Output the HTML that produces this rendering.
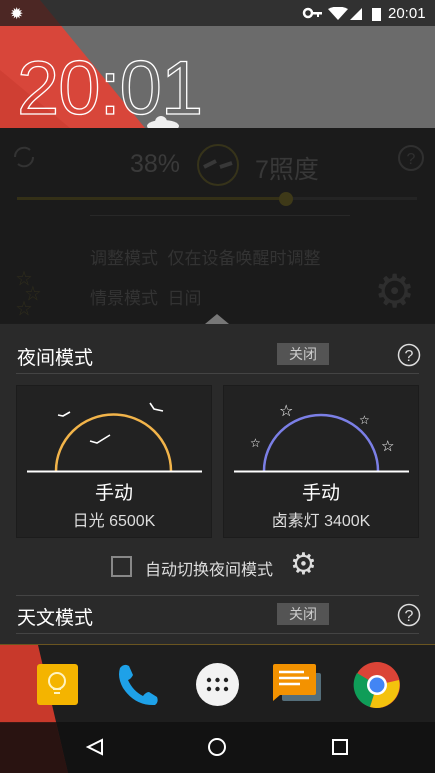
<!DOCTYPE html>
<html><head><meta charset="utf-8"><style>
*{margin:0;padding:0;box-sizing:border-box}
body{width:435px;height:773px;overflow:hidden;background:#1c1c1c;font-family:"Liberation Sans","Noto Sans CJK SC",sans-serif;position:relative;color:#fff}
.abs{position:absolute}
</style></head><body>
<div class="abs" style="left:0;top:0;width:435px;height:128px;background:#6b6b6b"></div>
<svg class="abs" style="left:0;top:0" width="435" height="128"><polygon points="0,0 40,0 145,128 0,128" fill="#d8463a"/><polygon points="0,70 70,128 0,128" fill="#c93a2f" opacity=".6"/></svg>
<div class="abs" style="left:0;top:0;width:435px;height:26px;background:rgba(30,30,30,.75)"></div>
<div class="abs" style="left:10px;top:4px;font-size:16px;color:#fff">✹</div>
<svg class="abs" style="left:302px;top:7px" width="90" height="14">
<circle cx="6" cy="6" r="4" fill="none" stroke="#fff" stroke-width="2.5"/><rect x="9" y="5" width="11" height="2.5" fill="#fff"/><rect x="15" y="6" width="2" height="4" fill="#fff"/>
<path d="M26 2 Q36 -3 46 2 L36 13 Z" fill="#fff"/>
<path d="M60 1 L60 13 L48 13 Z" fill="#fff"/>
<rect x="70" y="1" width="9" height="13" fill="#fff"/>
</svg>
<div class="abs" style="left:388px;top:5px;font-size:15px">20:01</div>
<div class="abs" style="left:17px;top:49px;font-size:76px;line-height:80px;letter-spacing:-1px;color:transparent;-webkit-text-stroke:1.3px #fff;font-family:'Liberation Sans',sans-serif">20:01</div>
<svg class="abs" style="left:143px;top:116px" width="40" height="13"><ellipse cx="20" cy="10" rx="16" ry="6" fill="#eee"/><circle cx="18" cy="6" r="6" fill="#eee"/></svg>
<div class="abs" style="left:0;top:128px;width:435px;height:195px;background:#1b1b1b"></div>
<svg class="abs" style="left:10px;top:144px" width="28" height="26"><path d="M5 13 A9 9 0 0 1 20 6 M23 13 A9 9 0 0 1 8 20" stroke="#333" stroke-width="2" fill="none"/></svg>
<div class="abs" style="left:130px;top:150px;font-size:25px;color:#3a3a3a">38%</div>
<svg class="abs" style="left:196px;top:143px" width="44" height="44"><circle cx="22" cy="22" r="20" stroke="#36331a" stroke-width="2" fill="none"/><path d="M8 24 L20 18 M24 24 L36 20" stroke="#383838" stroke-width="4"/></svg>
<div class="abs" style="left:255px;top:150px;font-size:25px;color:#383838">7照度</div>
<svg class="abs" style="left:397px;top:144px" width="28" height="28"><circle cx="14" cy="14" r="12" stroke="#303030" stroke-width="2" fill="none"/><text x="14" y="20" font-size="16" fill="#303030" text-anchor="middle" font-family="Liberation Sans">?</text></svg>
<div class="abs" style="left:17px;top:197px;width:270px;height:3px;background:#343017"></div>
<div class="abs" style="left:287px;top:197px;width:130px;height:3px;background:#242424"></div>
<div class="abs" style="left:279px;top:192px;width:14px;height:14px;border-radius:7px;background:#3e3918"></div>
<div class="abs" style="left:90px;top:215px;width:260px;height:1px;background:#282828"></div>
<div class="abs" style="left:90px;top:244px;font-size:17px;color:#333;white-space:nowrap">调整模式&nbsp;&nbsp;仅在设备唤醒时调整</div>
<div class="abs" style="left:90px;top:284px;font-size:17px;color:#333;white-space:nowrap">情景模式&nbsp;&nbsp;日间</div>
<div class="abs" style="left:16px;top:272px;font-size:16px;color:#2f2d1c;line-height:15px">☆<br>&nbsp;&nbsp;☆<br>☆</div>
<div class="abs" style="left:374px;top:268px;font-size:46px;color:#2e2e2e;line-height:46px">⚙</div>
<svg class="abs" style="left:205px;top:314px" width="24" height="10"><polygon points="12,0 24,10 0,10" fill="#777"/></svg>
<div class="abs" style="left:0;top:324px;width:435px;height:320px;background:#2a2a2a"></div>
<div class="abs" style="left:17px;top:343px;font-size:19px">夜间模式</div>
<div class="abs" style="left:277px;top:343px;width:52px;height:22px;background:#545454;font-size:14px;color:#ccc;text-align:center;line-height:22px">关闭</div>
<svg class="abs" style="left:397px;top:343px" width="24" height="24"><circle cx="12" cy="12" r="10.5" stroke="#ddd" stroke-width="1.5" fill="none"/><text x="12" y="18" font-size="16" fill="#ddd" text-anchor="middle" font-family="Liberation Sans">?</text></svg>
<div class="abs" style="left:16px;top:373px;width:403px;height:1px;background:#444"></div>
<div class="abs" style="left:16px;top:385px;width:196px;height:153px;background:#222;border:1px solid #1c1c1c"></div>
<div class="abs" style="left:223px;top:385px;width:196px;height:153px;background:#222;border:1px solid #1c1c1c"></div>
<svg class="abs" style="left:16px;top:385px" width="196" height="100">
<path d="M40 86 A57 56 0 0 1 155 86" stroke="#f2b44a" stroke-width="2.5" fill="none"/>
<line x1="11" y1="86.5" x2="186" y2="86.5" stroke="#fff" stroke-width="2"/>
<path d="M42 30 L47 31 L54 27 M134 18 L138 24 L147 26 M74 56 L81 58 L94 50" stroke="#fff" stroke-width="1.6" fill="none"/>
</svg>
<svg class="abs" style="left:223px;top:385px" width="196" height="100">
<path d="M41 86 A57 56 0 0 1 155 86" stroke="#7b7fe6" stroke-width="2.5" fill="none"/>
<line x1="11" y1="86.5" x2="186" y2="86.5" stroke="#fff" stroke-width="2"/>
<text x="56" y="31" font-size="16" fill="#fff" font-family="DejaVu Sans">☆</text>
<text x="136" y="39" font-size="12" fill="#fff" font-family="DejaVu Sans">☆</text>
<text x="27" y="62" font-size="12" fill="#fff" font-family="DejaVu Sans">☆</text>
<text x="158" y="66" font-size="15" fill="#fff" font-family="DejaVu Sans">☆</text>
</svg>
<div class="abs" style="left:16px;top:478px;width:196px;text-align:center;font-size:19px">手动</div>
<div class="abs" style="left:16px;top:507px;width:196px;text-align:center;font-size:16px;color:#ddd">日光 6500K</div>
<div class="abs" style="left:223px;top:478px;width:196px;text-align:center;font-size:19px">手动</div>
<div class="abs" style="left:223px;top:507px;width:196px;text-align:center;font-size:16px;color:#ddd">卤素灯 3400K</div>
<div class="abs" style="left:111px;top:556px;width:21px;height:21px;border:2px solid #888"></div>
<div class="abs" style="left:145px;top:556px;font-size:16px;color:#ddd">自动切换夜间模式</div>
<div class="abs" style="left:290px;top:548px;font-size:30px;color:#ddd;line-height:34px">⚙</div>
<div class="abs" style="left:16px;top:595px;width:403px;height:1px;background:#444"></div>
<div class="abs" style="left:17px;top:603px;font-size:19px">天文模式</div>
<div class="abs" style="left:277px;top:603px;width:52px;height:22px;background:#545454;font-size:14px;color:#ccc;text-align:center;line-height:22px">关闭</div>
<svg class="abs" style="left:397px;top:603px" width="24" height="24"><circle cx="12" cy="12" r="10.5" stroke="#ddd" stroke-width="1.5" fill="none"/><text x="12" y="18" font-size="16" fill="#ddd" text-anchor="middle" font-family="Liberation Sans">?</text></svg>
<div class="abs" style="left:16px;top:633px;width:403px;height:1px;background:#444"></div>
<div class="abs" style="left:0;top:644px;width:435px;height:78px;background:#1e1e1e"></div>
<div class="abs" style="left:0;top:644px;width:435px;height:1px;background:#6a5520"></div>
<svg class="abs" style="left:0;top:645px" width="70" height="128"><polygon points="0,0 38,0 68,128 0,128" fill="#c8392b"/><polygon points="0,78 56,78 68,128 0,128" fill="#7a2018"/></svg>
<div class="abs" style="left:0;top:722px;width:435px;height:51px;background:rgba(15,15,15,.75)"></div>
<div class="abs" style="left:37px;top:664px;width:41px;height:41px;background:#f4b400;border-radius:3px"></div>
<svg class="abs" style="left:37px;top:664px" width="41" height="41"><circle cx="20" cy="17" r="8" stroke="#fff3c0" stroke-width="2" fill="none"/><path d="M16 25 h8 M17 29 h6" stroke="#fff3c0" stroke-width="2"/></svg>
<svg class="abs" style="left:115px;top:662px" width="46" height="46"><path d="M5 6 Q9 1 14 4 L18 13 Q16 17 13 18 Q18 29 28 34 Q31 30 34 30 L42 35 Q44 40 40 43 Q20 44 8 26 Q2 15 5 6Z" fill="#1ea1e8"/></svg>
<div class="abs" style="left:196px;top:663px;width:43px;height:43px;border-radius:50%;background:#f2f2f2"></div>
<svg class="abs" style="left:196px;top:663px" width="43" height="43" fill="#222"><circle cx="13" cy="17" r="2.2"/><circle cx="21.5" cy="17" r="2.2"/><circle cx="30" cy="17" r="2.2"/><circle cx="13" cy="26" r="2.2"/><circle cx="21.5" cy="26" r="2.2"/><circle cx="30" cy="26" r="2.2"/></svg>
<svg class="abs" style="left:272px;top:663px" width="52" height="44"><rect x="10" y="10" width="39" height="28" rx="2" fill="#546e7a"/><rect x="1" y="1" width="43" height="31" rx="2" fill="#f39200"/><path d="M1 30 L1 38 L8 32Z" fill="#f39200"/><path d="M7 9 h25 M7 15 h30 M7 21 h21" stroke="#fff" stroke-width="2.5"/></svg>
<svg class="abs" style="left:353px;top:661px" width="48" height="48"><circle cx="24" cy="24" r="23" fill="#db4437"/><path d="M24 24 L4 12 A23 23 0 0 0 17 46Z" fill="#0f9d58"/><path d="M24 24 L17 46 A23 23 0 0 0 46 19 L24 24Z" fill="#f4c20d"/><circle cx="24" cy="24" r="10" fill="#fff"/><circle cx="24" cy="24" r="7.5" fill="#4285f4"/></svg>
<svg class="abs" style="left:0;top:722px" width="435" height="51" fill="none" stroke="#fff" stroke-width="2"><path d="M102 18 L88 25 L102 32Z"/><circle cx="217" cy="25" r="8"/><rect x="333" y="18" width="14" height="14"/></svg>
</body></html>
